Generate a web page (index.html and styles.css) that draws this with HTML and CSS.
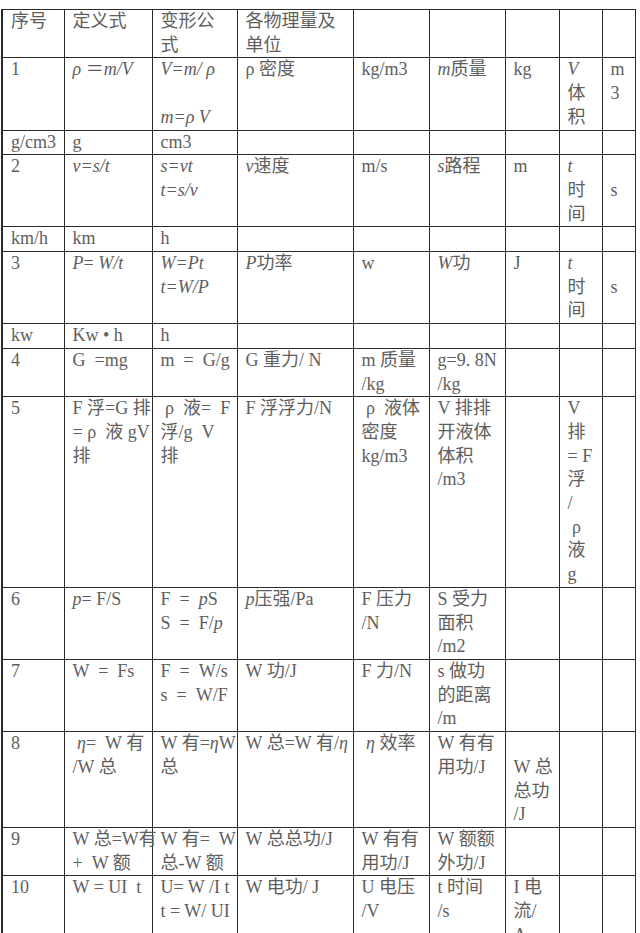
FILE: index.html
```html
<!DOCTYPE html>
<html lang="zh">
<head>
<meta charset="utf-8">
<title>物理公式表</title>
<link rel="stylesheet" href="styles.css">
</head>
<body>
<table class="formula-table">
  <colgroup>
    <col class="c1"><col class="c2"><col class="c3"><col class="c4"><col class="c5"><col class="c6"><col class="c7"><col class="c8"><col class="c9">
  </colgroup>
  <tbody>
    <tr>
      <td>序号</td><td>定义式</td><td>变形公<br>式</td><td>各物理量及<br>单位</td><td></td><td></td><td></td><td></td><td></td>
    </tr>
    <tr>
      <td>1</td><td><i>ρ</i> ＝<i>m/V</i></td><td><i>V=m/ ρ</i><br><br><i>m=ρ V</i></td><td>ρ 密度</td><td>kg/m3</td><td><i>m</i>质量</td><td>kg</td><td><i>V</i><br>体<br>积</td><td>m<br>3</td>
    </tr>
    <tr>
      <td>g/cm3</td><td>g</td><td>cm3</td><td></td><td></td><td></td><td></td><td></td><td></td>
    </tr>
    <tr>
      <td>2</td><td><i>v=s/t</i></td><td><i>s=vt</i><br><i>t=s/v</i></td><td><i>v</i>速度</td><td>m/s</td><td><i>s</i>路程</td><td>m</td><td><i>t</i><br>时<br>间</td><td><br>s</td>
    </tr>
    <tr>
      <td>km/h</td><td>km</td><td>h</td><td></td><td></td><td></td><td></td><td></td><td></td>
    </tr>
    <tr>
      <td>3</td><td><i>P</i>= <i>W/t</i></td><td><i>W=Pt</i><br><i>t=W/P</i></td><td><i>P</i>功率</td><td>w</td><td><i>W</i>功</td><td>J</td><td><i>t</i><br>时<br>间</td><td><br>s</td>
    </tr>
    <tr>
      <td>kw</td><td>Kw • h</td><td>h</td><td></td><td></td><td></td><td></td><td></td><td></td>
    </tr>
    <tr>
      <td>4</td><td>G &nbsp;=mg</td><td>m &nbsp;= &nbsp;G/g</td><td>G 重力/ N</td><td>m 质量<br>/kg</td><td>g=9. 8N<br>/kg</td><td></td><td></td><td></td>
    </tr>
    <tr>
      <td>5</td><td>F 浮=G 排<br>= ρ &nbsp;液 gV<br>排</td><td>&nbsp;ρ &nbsp;液= &nbsp;F<br>浮/g &nbsp;V<br>排</td><td>F 浮浮力/N</td><td>&nbsp;ρ &nbsp;液体<br>密度<br>kg/m3</td><td>V 排排<br>开液体<br>体积<br>/m3</td><td></td><td>V<br>排<br>= F<br>浮<br>/<br>&nbsp;ρ<br>液<br>g</td><td></td>
    </tr>
    <tr>
      <td>6</td><td><i>p</i>= F/S</td><td>F &nbsp;= &nbsp;<i>p</i>S<br>S &nbsp;= &nbsp;F/<i>p</i></td><td><i>p</i>压强/Pa</td><td>F 压力<br>/N</td><td>S 受力<br>面积<br>/m2</td><td></td><td></td><td></td>
    </tr>
    <tr>
      <td>7</td><td>W &nbsp;= &nbsp;Fs</td><td>F &nbsp;= &nbsp;W/s<br>s &nbsp;= &nbsp;W/F</td><td>W 功/J</td><td>F 力/N</td><td>s 做功<br>的距离<br>/m</td><td></td><td></td><td></td>
    </tr>
    <tr>
      <td>8</td><td>&nbsp;<i>η</i>= &nbsp;W 有<br>/W 总</td><td>W 有=<i>η</i>W<br>总</td><td>W 总=W 有/<i>η</i></td><td>&nbsp;<i>η</i> 效率</td><td>W 有有<br>用功/J</td><td><br>W 总<br>总功<br>/J</td><td></td><td></td>
    </tr>
    <tr>
      <td>9</td><td>W 总=W有<br>+ &nbsp;W 额</td><td>W 有= &nbsp;W<br>总-W 额</td><td>W 总总功/J</td><td>W 有有<br>用功/J</td><td>W 额额<br>外功/J</td><td></td><td></td><td></td>
    </tr>
    <tr>
      <td>10</td><td>W = UI &nbsp;t</td><td>U= W /I t<br>t = W/ UI</td><td>W 电功/ J</td><td>U 电压<br>/V</td><td>t 时间<br>/s</td><td>I 电<br>流/<br>A</td><td></td><td></td>
    </tr>
  </tbody>
</table>
</body>
</html>
```

FILE: styles.css
```css
html, body {
  margin: 0;
  padding: 0;
  background: #ffffff;
}

body {
  padding: 9px 0 0 1px;
}

.formula-table {
  border-collapse: collapse;
  table-layout: fixed;
  width: 633px;
  font-family: "Liberation Serif", "Noto Sans CJK SC", serif;
  font-size: 18px;
  line-height: 23.7px;
  color: #5e5e5e;
}

.formula-table td {
  border: 1px solid #2a2a2a;
  padding: 0 0 0 8px;
  vertical-align: top;
  white-space: nowrap;
}

.formula-table tr > td:first-child {
  border-left: 2px solid #2a2a2a;
}

.formula-table i {
  font-style: italic;
}

.c1 { width: 62px; }
.c2 { width: 88px; }
.c3 { width: 85px; }
.c4 { width: 116px; }
.c5 { width: 76px; }
.c6 { width: 76px; }
.c7 { width: 54px; }
.c8 { width: 43px; }
.c9 { width: 33px; }
```
